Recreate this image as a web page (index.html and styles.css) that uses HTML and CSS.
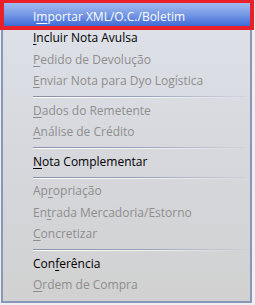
FILE: index.html
```html
<!DOCTYPE html>
<html>
<head>
<meta charset="utf-8">
<link rel="stylesheet" href="styles.css">
</head>
<body>
<div class="menu">
  <div class="item active"><span class="label">I<u>m</u>portar XML/O.C./Boletim</span></div>
  <div class="item"><span class="label"><u>I</u>ncluir Nota Avulsa</span></div>
  <div class="item disabled"><span class="label"><u>P</u>edido de Devolução</span></div>
  <div class="item disabled"><span class="label"><u>E</u>nviar Nota para Dyo Logística</span></div>
  <div class="sep"></div>
  <div class="item disabled"><span class="label"><u>D</u>ados do Remetente</span></div>
  <div class="item disabled"><span class="label"><u>A</u>nálise de Crédito</span></div>
  <div class="sep"></div>
  <div class="item"><span class="label"><u>N</u>ota Complementar</span></div>
  <div class="sep"></div>
  <div class="item disabled"><span class="label">Ap<u>r</u>opriação</span></div>
  <div class="item disabled"><span class="label">En<u>t</u>rada Mercadoria/Estorno</span></div>
  <div class="item disabled"><span class="label"><u>C</u>oncretizar</span></div>
  <div class="sep"></div>
  <div class="item"><span class="label">Con<u>f</u>erência</span></div>
  <div class="item disabled"><span class="label"><u>O</u>rdem de Compra</span></div>
</div>
</body>
</html>
```
FILE: styles.css
```css
html, body {
  margin: 0;
  padding: 0;
  background: #eceef2;
  width: 255px;
  height: 305px;
  overflow: hidden;
}
.menu {
  position: relative;
  box-sizing: border-box;
  margin-left: 1px;
  width: 251px;
  height: 303px;
  padding: 5.25px 0 0 0;
  border: 2px solid #8a97b6;
  border-top: none;
  background: linear-gradient(to bottom, #dfe2ea 0%, #d6d8dd 50%, #d1d1d1 100%);
  font-family: "Open Sans", "Noto Sans", sans-serif;
  font-size: 12px;
  color: #000;
}
.item {
  position: relative;
  height: 21.5px;
  display: flex;
  align-items: center;
  padding-left: 30px;
}
.item u {
  text-decoration-thickness: 1px;
  text-underline-offset: 2px;
}
.disabled {
  color: #8e8e8e;
}
.active {
  color: #fff;
}
.active::before {
  content: "";
  position: absolute;
  left: 1px;
  right: -1px;
  top: -2px;
  bottom: 1px;
  background: linear-gradient(to bottom, #a2baee 0%, #7b9ce6 45%, #3e6cd8 100%);
  z-index: 0;
}
.active::after {
  content: "";
  position: absolute;
  left: -3px;
  right: -4px;
  top: -6px;
  bottom: -3px;
  border: 4px solid #e8202a;
  z-index: 2;
}
.label {
  position: relative;
  z-index: 1;
}
.sep {
  height: 8px;
  margin-left: 30px;
  margin-right: 4px;
  position: relative;
}
.sep::before {
  content: "";
  position: absolute;
  left: 0;
  right: 0;
  top: 5px;
  height: 1px;
  background: linear-gradient(to right, #8a90a8 0%, #9aa0b8 50%, rgba(200,204,216,0.3) 100%);
}
.sep::after {
  content: "";
  position: absolute;
  left: 0;
  right: 0;
  top: 6px;
  height: 1px;
  background: linear-gradient(to right, #ffffff 0%, rgba(255,255,255,0.6) 60%, rgba(255,255,255,0) 100%);
}
```
